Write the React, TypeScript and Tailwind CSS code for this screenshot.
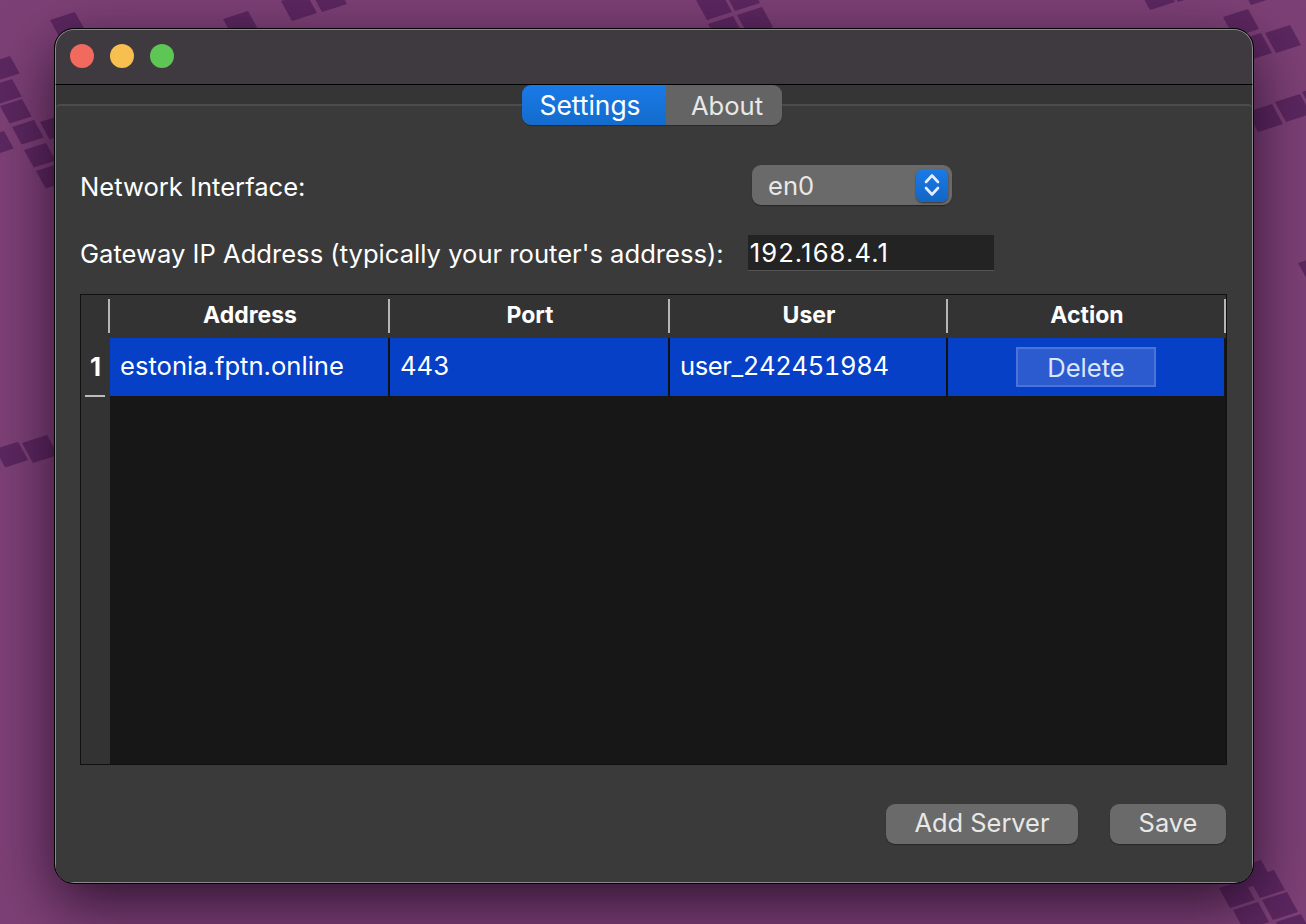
const tiles: [number, number, number][] = [
  [50, 20, 1], [-12, 63, 0.88], [-10, 86, 0.88], [0, 106, 0.88], [12, 127, 0.88], [-18, 138, 0.88], [40, 122, 0.88], [24, 150, 0.88], [36, 171, 0.88],
  [-5, 449, 0.92], [22, 443, 1],
  [223, 19, 1], [281, 1, 1], [311, -8, 1], [696, 0, 1], [724, -9, 1], [708, 24, 1], [737, 15, 1],
  [1139, -10, 1], [1167, -18, 1], [1223, 17, 1], [1265, 33, 1], [1236, 41, 1], [1240, -15, 1],
  [1247, 112, 1], [1275, 102, 1], [1302, 92, 1], [1298, 263, 1],
  [1236, 868, 1], [1219, 888, 1], [1249, 878, 1], [1233, 910, 1], [1262, 900, 1], [1247, 932, 1], [1276, 922, 1],
];

function Wallpaper() {
  return (
    <svg className="absolute inset-0" width="1306" height="924" viewBox="0 0 1306 924">
      {tiles.map(([x, y, s], i) => (
        <polygon key={i} points={`${x},${y} ${x + 25 * s},${y - 8 * s} ${x + 36 * s},${y + 12 * s} ${x + 11 * s},${y + 20 * s}`} fill="#5c2760" />
      ))}
    </svg>
  );
}

function Dot({ className }: { className: string }) {
  return <div className={`w-6 h-6 rounded-full ${className}`} />;
}

function HeaderCell({ label }: { label: string }) {
  return (
    <div className="relative flex items-center justify-center pb-[2px] font-bold text-[23px] text-white">
      {label}
      <div className="absolute right-0 top-[4px] h-[34px] w-[2px] bg-[#b5b5b5]" />
    </div>
  );
}

function Cell({ label, className = "" }: { label: string; className?: string }) {
  return (
    <div className={`flex items-center pl-[10px] pb-[2px] text-[25.6px] text-white border-r-2 border-[#111] ${className}`}>{label}</div>
  );
}

function Button({ label, className }: { label: string; className: string }) {
  return (
    <button className={`h-10 pb-[1px] rounded-[9px] bg-[#6a6a6a] text-[25.4px] text-[#e8e8e8] shadow-[0_1px_1px_rgba(0,0,0,0.35)] flex items-center justify-center ${className}`}>
      {label}
    </button>
  );
}

export default function App() {
  return (
    <div
      className="relative w-[1306px] h-[924px] overflow-hidden bg-[#7d4076]"
      style={{ fontFamily: "Inter, 'Liberation Sans', sans-serif" }}
    >
      <Wallpaper />
      <div className="relative ml-[54px] pt-[28px] w-[1200px]">
        <div className="h-[856px] rounded-[20px] border border-black bg-[#3a3a3a] shadow-[0_20px_60px_rgba(15,0,20,0.7)] flex flex-col overflow-hidden">
          <div className="h-[55px] shrink-0 bg-[#3e3a40] border-t border-l border-r border-[#8a8a8a] border-b-0 rounded-t-[19px] flex items-center gap-4 pl-[14px] pb-[2px]">
            <Dot className="bg-[#f16a5d]" />
            <Dot className="bg-[#f6bf4f]" />
            <Dot className="bg-[#5ec654]" />
          </div>
          <div className="flex-1 flex flex-col bg-[#353535] border-t border-black border-x border-x-[#8a8a8a] border-b border-b-[#8a8a8a] rounded-b-[19px]">
            <div className="mt-[19px] flex-1 flex flex-col bg-[#3a3a3a] border-t-2 border-[#4c4c4c] rounded-t-[4px]">
              <div className="-mt-[21px] flex justify-center pr-[4px]">
                <div className="flex h-10 w-[260px] rounded-[9px] overflow-hidden shadow-[0_1px_1px_rgba(0,0,0,0.3)]">
                  <div className="w-[144px] flex items-center justify-center pr-[8px] pt-[2px] text-[26.4px] text-white bg-gradient-to-b from-[#1a7ae8] to-[#136ccc]">Settings</div>
                  <div className="flex-1 flex items-center justify-center pl-[6px] pt-[2px] text-[25.6px] text-[#e8e8e8] bg-[#646464]">About</div>
                </div>
              </div>
              <div className="flex items-center justify-between mt-[40px] pl-[24px] pr-[300px] h-10">
                <span className="text-[25.6px] text-white pt-[5px]">Network Interface:</span>
                <div className="w-[200px] h-10 rounded-[9px] bg-[#6a6a6a] flex items-center justify-between pl-[16px] pr-[4px] text-[25.6px] text-[#e8e8e8] shadow-[0_1px_1px_rgba(0,0,0,0.35)]">
                  <span className="pt-[2px]">en0</span>
                  <div className="w-[32px] h-[33px] rounded-[7px] bg-gradient-to-b from-[#1a7ae8] to-[#1266c4] shadow-[0_1px_2px_rgba(0,0,0,0.5)] flex items-center justify-center">
                    <svg width="16" height="26" viewBox="0 0 16 26" fill="none" stroke="#e4eeff" strokeWidth="2.6" strokeLinecap="round" strokeLinejoin="round">
                      <path d="M2 10 8 3.5 14 10" />
                      <path d="M2 16 8 22.5 14 16" />
                    </svg>
                  </div>
                </div>
              </div>
              <div className="flex items-center mt-[30px] pl-[24px] h-9 gap-[24px]">
                <span className="text-[25.6px] text-white whitespace-nowrap pt-[3px]">Gateway IP Address (typically your router's address):</span>
                <div className="w-[246px] h-9 bg-[#232323] border-b border-[#555] pl-[2px] pt-[2px] flex items-center text-[25.6px] tracking-[1.1px] text-white">192.168.4.1</div>
              </div>
              <div className="mt-[23px] ml-[24px] mr-[25px] h-[471px] border border-[#111] bg-[#171717] flex flex-col">
                <div className="flex h-[43px] bg-[#333333] shrink-0">
                  <div className="grid grid-cols-[29px_280px_280px_278px_278px] h-full">
                    <HeaderCell label="" />
                    <HeaderCell label="Address" />
                    <HeaderCell label="Port" />
                    <HeaderCell label="User" />
                    <HeaderCell label="Action" />
                  </div>
                </div>
                <div className="flex flex-1">
                  <div className="w-[29px] bg-[#333333] shrink-0">
                    <div className="relative h-[59px] flex items-center justify-center text-[25.6px] font-bold text-white">
                      1
                      <div className="absolute bottom-0 left-[4px] w-[20px] h-[2px] bg-[#bdbdbd]" />
                    </div>
                  </div>
                  <div className="grid grid-cols-[280px_280px_278px_276px] h-[58px] bg-[#0540c6]">
                    <Cell label="estonia.fptn.online" />
                    <Cell label="443" className="tabular-nums" />
                    <Cell label="user_242451984" className="tabular-nums tracking-[-0.4px]" />
                    <div className="flex items-center justify-center">
                      <div className="w-[140px] h-10 bg-[#2c5bd0] border-2 border-[#4a74d8] pt-[3px] flex items-center justify-center text-[25.6px] text-[#dce6fa]">Delete</div>
                    </div>
                  </div>
                </div>
              </div>
              <div className="flex justify-end gap-[32px] mt-[39px] pr-[26px]">
                <Button label="Add Server" className="w-[192px]" />
                <Button label="Save" className="w-[116px]" />
              </div>
            </div>
          </div>
        </div>
      </div>
    </div>
  );
}
